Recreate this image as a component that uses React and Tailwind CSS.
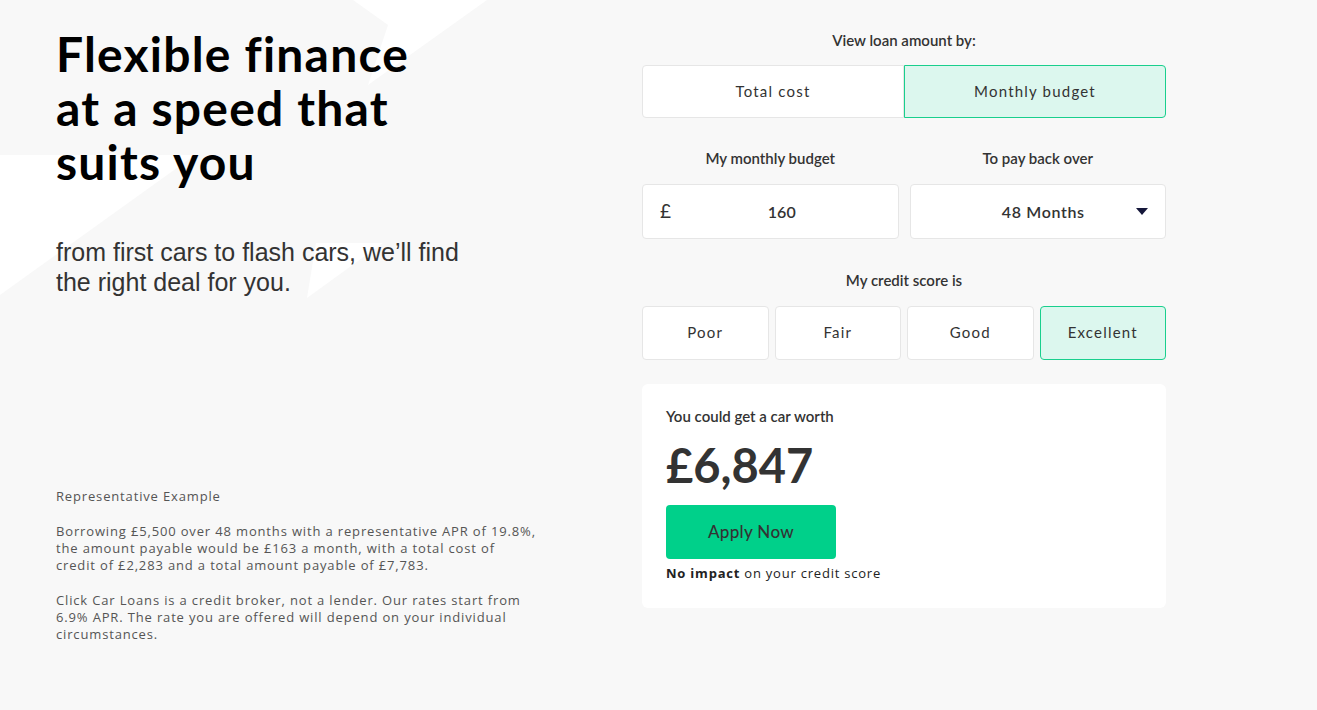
import React, { useState } from "react";

const heading = { fontFamily: "Lato, 'Noto Sans', sans-serif" };
const ui = { fontFamily: "Lato, 'Noto Sans', sans-serif" };
const body = { fontFamily: "'Open Sans', 'Noto Sans', sans-serif" };

const Backdrop = () => (
  <svg
    className="absolute inset-0 pointer-events-none"
    width="1317"
    height="710"
    viewBox="0 0 1317 710"
  >
    <polygon points="353,0 487,0 368,85 388,25" fill="#ffffff" />
    <polygon points="0,155 195,155 0,295" fill="#ffffff" />
    <polygon points="316,243 383,243 307,298" fill="#ffffff" />
  </svg>
);

const Option = ({ label, active, onClick, className = "" }) => (
  <button
    type="button"
    onClick={onClick}
    className={`h-full rounded-[4px] border text-[15px] tracking-[0.08em] text-[#333] ${
      active ? "border-[#19cf8d] bg-[#dcf7ee]" : "border-[#e6e6e6] bg-white"
    } ${className}`}
    style={ui}
  >
    {label}
  </button>
);

export default function App() {
  const [mode, setMode] = useState("monthly");
  const [score, setScore] = useState("Excellent");

  return (
    <div className="relative h-[710px] w-full overflow-hidden bg-[#f8f8f8]">
      <Backdrop />
      <div className="relative flex">
        <div className="w-[642px] pl-[56px]">
          <h1
            className="pt-[27px] text-[48px] font-bold leading-[54px] tracking-[0.025em] text-black"
            style={heading}
          >
            Flexible finance
            <br />
            at a speed that
            <br />
            suits you
          </h1>
          <p
            className="mt-[48px] text-[25px] leading-[30px] text-[#333]"
            style={{ fontFamily: "'Liberation Sans', Arial, sans-serif" }}
          >
            from first cars to flash cars, we’ll find
            <br />
            the right deal for you.
          </p>
          <div
            className="mt-[191px] w-[520px] text-[13px] leading-[17px] tracking-[0.065em] text-[#555]"
            style={body}
          >
            <p>Representative Example</p>
            <p className="mt-[18px]">
              Borrowing £5,500 over 48 months with a representative APR of 19.8%,
              <br />
              the amount payable would be £163 a month, with a total cost of
              <br />
              credit of £2,283 and a total amount payable of £7,783.
            </p>
            <p className="mt-[18px]">
              Click Car Loans is a credit broker, not a lender. Our rates start from
              <br />
              6.9% APR. The rate you are offered will depend on your individual
              <br />
              circumstances.
            </p>
          </div>
        </div>

        <div className="w-[524px] pt-[29px]" style={ui}>
          <p className="text-center text-[15px] font-semibold text-[#333]">
            View loan amount by:
          </p>
          <div className="mt-[13px] flex h-[53px]">
            <Option
              label="Total cost"
              active={mode === "total"}
              onClick={() => setMode("total")}
              className="flex-1 rounded-r-none"
            />
            <Option
              label="Monthly budget"
              active={mode === "monthly"}
              onClick={() => setMode("monthly")}
              className="flex-1 rounded-l-none"
            />
          </div>

          <div className="mt-[29px] grid grid-cols-2 gap-[11px]">
            <div>
              <p className="text-center text-[15px] font-semibold text-[#333]">
                My monthly budget
              </p>
              <div className="mt-[15px] flex h-[55px] items-center rounded-[4px] border border-[#e6e6e6] bg-white px-[17px]">
                <span className="text-[19px] text-[#333]">£</span>
                <span className="flex-1 pl-[12px] text-center text-[16px] font-semibold text-[#333]">
                  160
                </span>
              </div>
            </div>
            <div>
              <p className="text-center text-[15px] font-semibold text-[#333]">
                To pay back over
              </p>
              <div className="mt-[15px] flex h-[55px] items-center rounded-[4px] border border-[#e6e6e6] bg-white pl-[40px] pr-[17px]">
                <span className="flex-1 text-center text-[16px] font-semibold tracking-[0.04em] text-[#333]">
                  48 Months
                </span>
                <svg width="12" height="8" viewBox="0 0 12 8">
                  <polygon points="0,0 12,0 6,7" fill="#15173a" />
                </svg>
              </div>
            </div>
          </div>

          <p className="mt-[30px] text-center text-[15px] font-semibold text-[#333]">
            My credit score is
          </p>
          <div className="mt-[14px] grid h-[54px] grid-cols-4 gap-[6px]">
            {["Poor", "Fair", "Good", "Excellent"].map((s) => (
              <Option
                key={s}
                label={s}
                active={score === s}
                onClick={() => setScore(s)}
              />
            ))}
          </div>

          <div className="mt-[24px] rounded-[6px] bg-white px-[24px] pb-[24px] pt-[21px]">
            <p className="text-[15px] font-semibold text-[#333]">
              You could get a car worth
            </p>
            <p className="mt-[10px] text-[47px] font-bold leading-[56px] text-[#333]">
              £6,847
            </p>
            <button
              type="button"
              className="mt-[12px] h-[54px] w-[170px] rounded-[4px] bg-[#00d08a] text-[17px] font-medium tracking-[0.02em] text-[#333]"
            >
              Apply Now
            </button>
            <p
              className="mt-[5px] text-[13px] tracking-[0.06em] text-[#222]"
              style={body}
            >
              <span className="font-bold">No impact</span> on your credit score
            </p>
          </div>
        </div>
      </div>
    </div>
  );
}
